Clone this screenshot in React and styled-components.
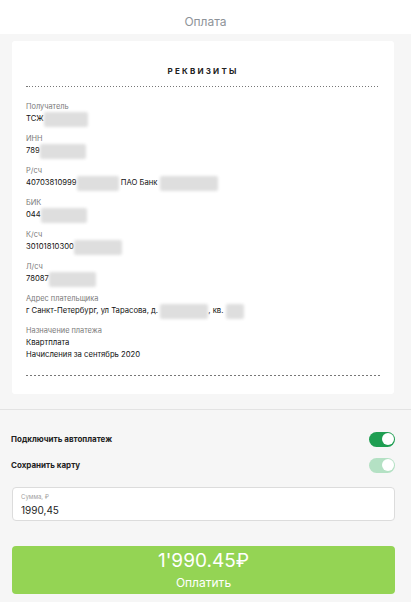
import React, { useState } from "react";
import styled, { createGlobalStyle } from "styled-components";

const Global = createGlobalStyle`
  body {
    margin: 0;
    background: #f6f6f6;
    font-family: Inter, "Noto Sans", sans-serif;
  }
`;

const Page = styled.div`
  width: 411px;
  min-height: 602px;
  background: #f6f6f6;
`;

const TopBar = styled.div`
  height: 34px;
  background: #fff;
  color: #8e9399;
  font-size: 12px;
  line-height: 16px;
  padding-top: 14px;
  box-sizing: border-box;
  text-align: center;
`;

const Card = styled.div`
  margin: 7px 17px 0 12px;
  background: #fff;
  border-radius: 3px;
  padding: 24px 14px 18px;
  display: flex;
  flex-direction: column;
`;

const Title = styled.div`
  font-size: 8px;
  font-weight: 700;
  letter-spacing: 2.2px;
  line-height: 12px;
  color: #222;
  text-align: center;
`;

const Dashes = styled.div`
  height: 1px;
  margin: ${(p) => p.$margin};
  background-image: repeating-linear-gradient(
    to right,
    #777 0 ${(p) => p.$dash}px,
    transparent ${(p) => p.$dash}px ${(p) => p.$period}px
  );
`;

const Fields = styled.div`
  display: flex;
  flex-direction: column;
  gap: 8px;
`;

const Field = styled.div`
  display: flex;
  flex-direction: column;
`;

const Label = styled.div`
  font-size: 7.4px;
  line-height: 12px;
  color: #7a7a7a;
`;

const Value = styled.div`
  height: 12px;
  font-size: 7.7px;
  line-height: 12px;
  color: #111;
  white-space: nowrap;
  display: flex;
  align-items: center;
`;

const Blur = styled.span`
  display: inline-block;
  width: ${(p) => p.$w}px;
  height: 15px;
  margin: -1.5px 0;
  background: #dedede;
  filter: blur(1.5px);
  border-radius: 2px;
  flex-shrink: 0;
`;

const Bottom = styled.div`
  margin-top: 15px;
  border-top: 1px solid #e3e3e3;
  padding: 19px 16px 0 11px;
  display: flex;
  flex-direction: column;
`;

const Row = styled.div`
  height: 20px;
  display: flex;
  align-items: center;
  justify-content: space-between;
  margin-top: ${(p) => p.$mt || 0}px;
`;

const RowText = styled.div`
  font-size: 8px;
  font-weight: 700;
  color: #222;
`;

const Toggle = styled.button`
  width: 26px;
  height: 15px;
  border: none;
  padding: 0;
  border-radius: 8px;
  background: ${(p) => (p.$faded ? "#b4e1c4" : p.$on ? "#1f9e52" : "#d3d3d3")};
  position: relative;
  cursor: pointer;

  &::after {
    content: "";
    position: absolute;
    top: 1.5px;
    left: ${(p) => (p.$on ? "12.5px" : "1.5px")};
    width: 12px;
    height: 12px;
    border-radius: 50%;
    background: #fff;
  }
`;

const InputBox = styled.label`
  margin-top: 12px;
  margin-left: 1px;
  height: 34px;
  box-sizing: border-box;
  background: #fff;
  border: 1px solid #dcdcdc;
  border-radius: 4px;
  padding: 4px 8px 0;
  display: flex;
  flex-direction: column;
`;

const InputLabel = styled.span`
  font-size: 6px;
  line-height: 10px;
  color: #a0a0a0;
`;

const Input = styled.input`
  border: none;
  outline: none;
  padding: 0;
  font-family: inherit;
  font-size: 10px;
  line-height: 16px;
  color: #1e1e1e;
  background: transparent;
`;

const PayButton = styled.button`
  margin-top: 25px;
  margin-left: 1px;
  height: 48px;
  border: none;
  border-radius: 4px;
  background: #94d454;
  color: #fff;
  font-family: inherit;
  display: flex;
  flex-direction: column;
  align-items: center;
  justify-content: center;
  cursor: pointer;
`;

const Amount = styled.span`
  font-size: 19px;
  line-height: 22px;
`;

const PayText = styled.span`
  font-size: 12px;
  line-height: 15px;
  margin-top: 3px;
`;

const fields = [
  { label: "Получатель", parts: ["ТСЖ", 44] },
  { label: "ИНН", parts: ["789", 46] },
  { label: "Р/сч", parts: ["40703810999", 42, "\u00a0ПАО Банк\u00a0", 58] },
  { label: "БИК", parts: ["044", 46] },
  { label: "К/сч", parts: ["30101810300", 48] },
  { label: "Л/сч", parts: ["78087", 47] },
  {
    label: "Адрес плательщика",
    parts: ["г Санкт-Петербург, ул Тарасова, д.\u00a0", 48, ", кв.\u00a0", 18],
  },
];

export default function App() {
  const [auto, setAuto] = useState(true);
  const [sum, setSum] = useState("1990,45");

  return (
    <Page>
      <Global />
      <TopBar>Оплата</TopBar>
      <Card>
        <Title>РЕКВИЗИТЫ</Title>
        <Dashes $dash={1.5} $period={3} $margin="9px 0 14px" />
        <Fields>
          {fields.map((f) => (
            <Field key={f.label}>
              <Label>{f.label}</Label>
              <Value>
                {f.parts.map((p, i) =>
                  typeof p === "number" ? <Blur key={i} $w={p} /> : <span key={i}>{p}</span>
                )}
              </Value>
            </Field>
          ))}
          <Field>
            <Label>Назначение платежа</Label>
            <Value>Квартплата</Value>
            <Value>Начисления за сентябрь 2020</Value>
          </Field>
        </Fields>
        <Dashes $dash={2} $period={4} $margin="14px 0 0" />
      </Card>
      <Bottom>
        <Row>
          <RowText>Подключить автоплатеж</RowText>
          <Toggle $on={auto} onClick={() => setAuto(!auto)} />
        </Row>
        <Row $mt={6}>
          <RowText>Сохранить карту</RowText>
          <Toggle $on $faded />
        </Row>
        <InputBox>
          <InputLabel>Сумма, ₽</InputLabel>
          <Input value={sum} onChange={(e) => setSum(e.target.value)} />
        </InputBox>
        <PayButton>
          <Amount>1'990.45₽</Amount>
          <PayText>Оплатить</PayText>
        </PayButton>
      </Bottom>
    </Page>
  );
}
